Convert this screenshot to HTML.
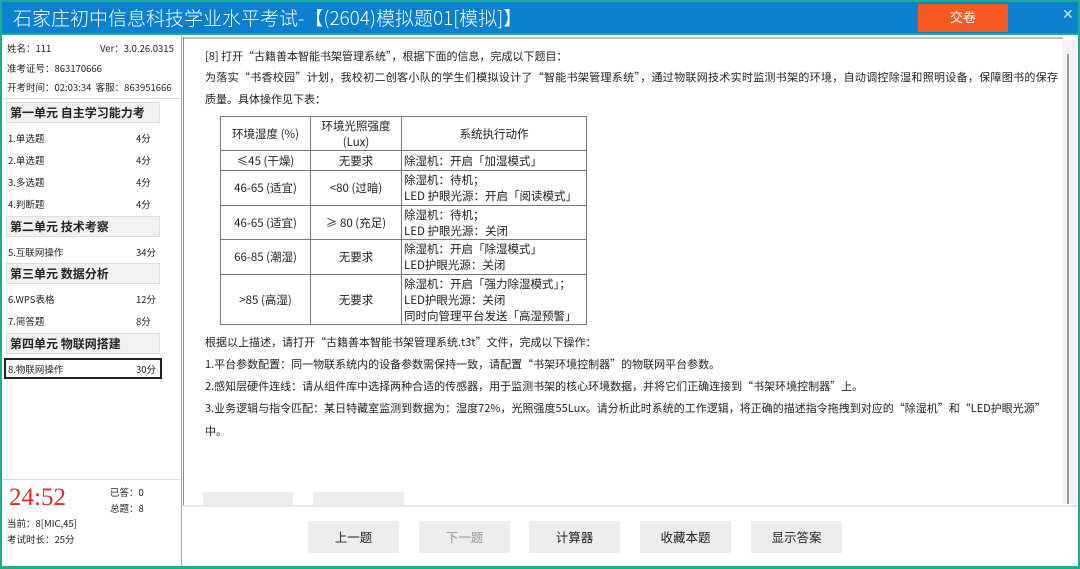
<!DOCTYPE html>
<html><head><meta charset="utf-8"><style>
*{margin:0;padding:0;box-sizing:border-box}
body{width:1080px;height:569px;overflow:hidden;background:#1cae8c;font-family:"Liberation Sans","Noto Sans CJK SC",sans-serif;color:#222;position:relative}
.abs{position:absolute}
#title{left:2px;top:2px;width:1076px;height:31px;background:#0a80cf;color:#fff;font-size:19px;line-height:31px;padding-left:11px;font-family:"Noto Sans CJK SC",sans-serif;font-weight:300}
#jiao{left:918px;top:4px;width:90px;height:28px;background:#f65a22;color:#fff;font-size:13px;text-align:center;line-height:28px}
#x{left:1062px;top:6px;color:#cfe6f7;font-size:14px}
#left{left:2px;top:35px;width:179px;height:531px;background:#fff}
#right{left:182px;top:35px;width:896px;height:531px;background:#fff}
.s{font-size:9.5px;font-family:"Noto Sans CJK SC",sans-serif;white-space:nowrap}
.sec{left:6px;width:154px;height:21px;background:#f1f1f1;border:1px solid #ddd;font-weight:bold;font-size:12px;line-height:19px;padding-left:3px;font-family:"Noto Sans CJK SC",sans-serif}
.it{left:8px;font-size:9.5px;width:145px;font-family:"Noto Sans CJK SC",sans-serif;white-space:nowrap}
.it b{font-weight:normal;position:absolute;left:128px;white-space:nowrap}
.t{left:205px;font-size:11px;font-family:"Noto Sans CJK SC",sans-serif;white-space:nowrap}
table{position:absolute;left:220px;top:116px;border-collapse:collapse;font-size:11.5px;font-family:"Noto Sans CJK SC",sans-serif}
td{border:1px solid #777;text-align:center;line-height:16px;padding:0}
td.l{text-align:left;padding-left:2px}
.btn{top:521px;width:91px;height:32px;background:#ececec;font-size:12.5px;text-align:center;line-height:32px;font-family:"Noto Sans CJK SC",sans-serif}
</style></head><body>
<div id="title" class="abs">石家庄初中信息科技学业水平考试-【(2604)模拟题01[模拟]】</div>
<div id="jiao" class="abs">交卷</div>
<div id="x" class="abs">✕</div>
<div id="left" class="abs"></div>
<div id="right" class="abs"></div>
<div class="abs" style="left:183px;top:37px;width:880px;height:2px;background:#bbb"></div>
<div class="abs" style="left:183px;top:37px;width:1px;height:468px;background:#888"></div>
<div class="abs" style="left:1062px;top:40px;width:14px;height:464px;background:#f3f3f3"></div>
<div class="abs" style="left:1067px;top:54px;width:2px;height:450px;background:#999"></div>
<div class="abs" style="left:183px;top:505px;width:895px;height:2px;background:#e6e6e6"></div>
<div class="abs" style="left:181px;top:35px;width:1px;height:531px;background:#aaa"></div>

<div class="abs s" style="left:7px;top:41px">姓名：111</div>
<div class="abs s" style="left:100px;top:41px">Ver：3.0.26.0315</div>
<div class="abs s" style="left:7px;top:61px">准考证号：863170666</div>
<div class="abs s" style="left:7px;top:80px">开考时间：02:03:34 &nbsp;客服：863951666</div>
<div class="abs" style="left:2px;top:98px;width:179px;height:1px;background:#ddd"></div>
<div class="abs sec" style="top:102px">第一单元 自主学习能力考</div>
<div class="abs it" style="top:131px">1.单选题<b>4分</b></div>
<div class="abs it" style="top:153px">2.单选题<b>4分</b></div>
<div class="abs it" style="top:175px">3.多选题<b>4分</b></div>
<div class="abs it" style="top:197px">4.判断题<b>4分</b></div>
<div class="abs sec" style="top:216px">第二单元 技术考察</div>
<div class="abs it" style="top:245px">5.互联网操作<b>34分</b></div>
<div class="abs sec" style="top:263px">第三单元 数据分析</div>
<div class="abs it" style="top:292px">6.WPS表格<b>12分</b></div>
<div class="abs it" style="top:314px">7.简答题<b>8分</b></div>
<div class="abs sec" style="top:333px">第四单元 物联网搭建</div>
<div class="abs" style="left:4px;top:358px;width:158px;height:21px;border:2px solid #222"></div>
<div class="abs it" style="top:362px">8.物联网操作<b>30分</b></div>
<div class="abs" style="left:2px;top:479px;width:179px;height:1px;background:#ddd"></div>
<div class="abs" style="left:9px;top:484px;color:#e8282c;font-size:25px;font-family:'Liberation Serif',serif">24:52</div>
<div class="abs s" style="left:110px;top:485px">已答：0</div>
<div class="abs s" style="left:110px;top:501px">总题：8</div>
<div class="abs s" style="left:7px;top:516px">当前：8[MIC,45]</div>
<div class="abs s" style="left:7px;top:532px">考试时长：25分</div>

<div class="abs t" style="top:48px">[8] 打开“古籍善本智能书架管理系统”，根据下面的信息，完成以下题目：</div>
<div class="abs t" style="top:69px;letter-spacing:0.3px">为落实“书香校园”计划，我校初二创客小队的学生们模拟设计了“智能书架管理系统”，通过物联网技术实时监测书架的环境，自动调控除湿和照明设备，保障图书的保存</div>
<div class="abs t" style="top:91px">质量。具体操作见下表：</div>
<table>
<tr style="height:34px"><td style="width:90px">环境湿度 (%)</td><td style="width:91px">环境光照强度<br>(Lux)</td><td style="width:185px">系统执行动作</td></tr>
<tr style="height:20px"><td>≤45 (干燥)</td><td>无要求</td><td class="l">除湿机：开启「加湿模式」</td></tr>
<tr style="height:35px"><td>46-65 (适宜)</td><td>&lt;80 (过暗)</td><td class="l">除湿机：待机；<br>LED 护眼光源：开启「阅读模式」</td></tr>
<tr style="height:34px"><td>46-65 (适宜)</td><td>≥ 80 (充足)</td><td class="l">除湿机：待机；<br>LED 护眼光源：关闭</td></tr>
<tr style="height:35px"><td>66-85 (潮湿)</td><td>无要求</td><td class="l">除湿机：开启「除湿模式」<br>LED护眼光源：关闭</td></tr>
<tr style="height:50px"><td>&gt;85 (高湿)</td><td>无要求</td><td class="l">除湿机：开启「强力除湿模式」；<br>LED护眼光源：关闭<br>同时向管理平台发送「高湿预警」</td></tr>
</table>
<div class="abs t" style="top:334px">根据以上描述，请打开“古籍善本智能书架管理系统.t3t”文件，完成以下操作：</div>
<div class="abs t" style="top:356px">1.平台参数配置：同一物联系统内的设备参数需保持一致，请配置“书架环境控制器”的物联网平台参数。</div>
<div class="abs t" style="top:378px">2.感知层硬件连线：请从组件库中选择两种合适的传感器，用于监测书架的核心环境数据，并将它们正确连接到“书架环境控制器”上。</div>
<div class="abs t" style="top:400px">3.业务逻辑与指令匹配：某日特藏室监测到数据为：湿度72%，光照强度55Lux。请分析此时系统的工作逻辑，将正确的描述指令拖拽到对应的“除湿机”和“LED护眼光源”</div>
<div class="abs t" style="top:423px">中。</div>

<div class="abs" style="left:203px;top:492px;width:90px;height:13px;background:#ececec"></div>
<div class="abs" style="left:313px;top:492px;width:91px;height:13px;background:#ececec"></div>
<div class="abs btn" style="left:308px">上一题</div>
<div class="abs btn" style="left:419px;color:#999">下一题</div>
<div class="abs btn" style="left:529px">计算器</div>
<div class="abs btn" style="left:640px">收藏本题</div>
<div class="abs btn" style="left:751px">显示答案</div>
</body></html>
